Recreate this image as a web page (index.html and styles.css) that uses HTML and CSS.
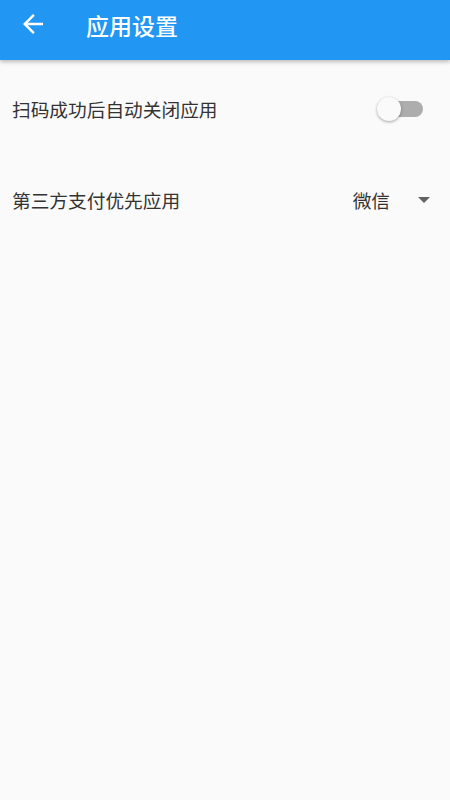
FILE: index.html
```html
<!DOCTYPE html>
<html lang="zh">
<head>
<meta charset="utf-8">
<link rel="stylesheet" href="styles.css">
</head>
<body>
<header class="appbar">
  <button class="back" aria-label="返回">
    <svg width="30" height="30" viewBox="0 0 24 24"><path d="M20 11H7.83l5.59-5.59L12 4l-8 8 8 8 1.41-1.41L7.83 13H20v-2z" fill="#fff"/></svg>
  </button>
  <h1 class="title">应用设置</h1>
</header>
<main class="list">
  <div class="row row-switch">
    <span class="label">扫码成功后自动关闭应用</span>
    <span class="switch"><span class="track"></span><span class="thumb"></span></span>
  </div>
  <div class="row row-select">
    <span class="label">第三方支付优先应用</span>
    <span class="select"><span class="value">微信</span><span class="caret"></span></span>
  </div>
</main>
</body>
</html>
```
FILE: styles.css
```css
html, body {
  margin: 0;
  padding: 0;
  background: #fafafa;
  font-family: "Noto Sans CJK SC", "Roboto", sans-serif;
  height: 100%;
}
.appbar {
  height: 60px;
  background: #2196f3;
  display: flex;
  align-items: center;
  box-shadow: 0 2px 4px rgba(0,0,0,0.25);
  position: relative;
  z-index: 1;
}
.back {
  background: none;
  border: 0;
  padding: 0;
  margin: -13px 0 0 18px;
  width: 30px;
  height: 30px;
  display: flex;
  align-items: center;
  justify-content: center;
}
.title {
  margin: -10px 0 0 38px;
  color: #fff;
  font-size: 23px;
  font-weight: 500;
}
.list {
  padding: 0 20px 0 12px;
}
.row {
  display: flex;
  align-items: center;
  justify-content: space-between;
  color: #333;
  font-size: 18.7px;
}
.row-switch {
  height: 92px;
  padding-top: 2px;
}
.row-select {
  height: 90px;
}
.switch {
  position: relative;
  width: 46px;
  height: 24px;
  margin-right: 7px;
  margin-top: 2px;
}
.track {
  position: absolute;
  left: 6px;
  right: 0;
  top: 4px;
  height: 16px;
  border-radius: 8px;
  background: #adadad;
}
.thumb {
  position: absolute;
  left: 0;
  top: 0;
  width: 24px;
  height: 24px;
  border-radius: 50%;
  background: #fafafa;
  box-shadow: 0 1px 3px rgba(0,0,0,0.35);
}
.select {
  display: flex;
  align-items: center;
}
.value {
  color: #333;
}
.caret {
  width: 0;
  height: 0;
  border-left: 6px solid transparent;
  border-right: 6px solid transparent;
  border-top: 6px solid #616161;
  margin-left: 28px;
  margin-top: 2px;
}
```
